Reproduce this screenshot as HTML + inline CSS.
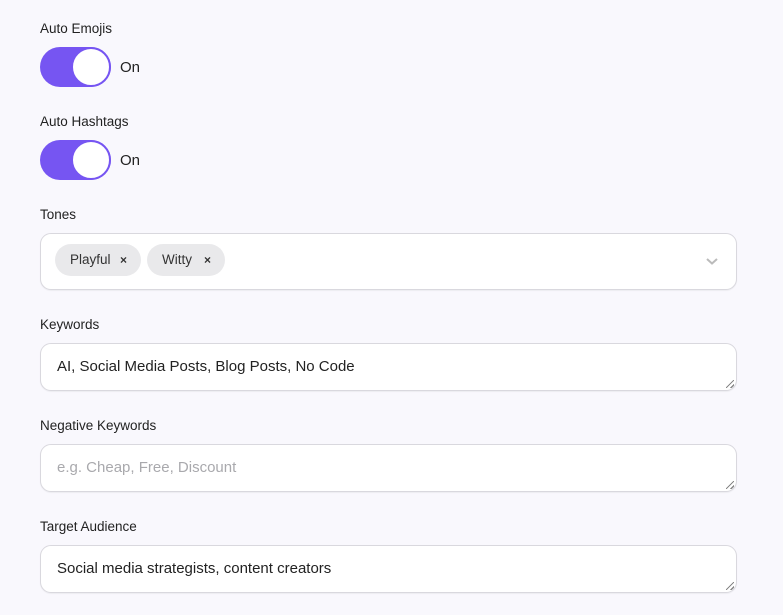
<!DOCTYPE html>
<html><head><style>
body{margin:0;width:783px;height:615px;background:#f9f8fd;font-family:"Liberation Sans",sans-serif;color:#1f1f24;position:relative;overflow:hidden}
.l{position:absolute;left:40px;font-size:13.5px;color:#222}
.tg{position:absolute;left:40px;width:71px;height:40px;border-radius:20px;background:#7655f2}
.tg::after{content:"";position:absolute;right:0;top:0;width:36px;height:36px;border-radius:50%;background:#fff;border:2px solid #7655f2}
.on{position:absolute;left:120px;font-size:15px;color:#222}
.box{position:absolute;left:40px;width:695px;background:#fff;border:1px solid #d9d8de;border-radius:11px;box-shadow:0 1px 1px rgba(0,0,0,.05)}
.in{position:absolute;left:57px;font-size:15px;color:#222}
.chip{position:absolute;top:244px;height:32px;line-height:32px;border-radius:16px;background:#e9e9eb;font-size:13.5px;padding-left:15px;box-sizing:border-box;color:#333}
.chip b{position:absolute;right:14px;font-size:12px}
.rs{position:absolute;right:2px;bottom:2px;width:8px;height:8px;background:linear-gradient(135deg,transparent 45%,#888 45%,#888 55%,transparent 55%,transparent 75%,#888 75%,#888 85%,transparent 85%)}
</style></head><body>
<div class="l" style="top:21px">Auto Emojis</div>
<div class="tg" style="top:47px"></div><div class="on" style="top:59px">On</div>
<div class="l" style="top:114px">Auto Hashtags</div>
<div class="tg" style="top:140px"></div><div class="on" style="top:152px">On</div>
<div class="l" style="top:207px">Tones</div>
<div class="box" style="top:233px;height:55px"></div>
<div class="chip" style="left:55px;width:86px">Playful<b>×</b></div>
<div class="chip" style="left:147px;width:78px">Witty<b>×</b></div>
<svg style="position:absolute;left:705px;top:257px" width="14" height="9"><path d="M2 2l5 4.5 5-4.5" fill="none" stroke="#bbb" stroke-width="2"/></svg>
<div class="l" style="top:317px">Keywords</div>
<div class="box" style="top:343px;height:46px"><div class="rs"></div></div>
<div class="in" style="top:358px">AI, Social Media Posts, Blog Posts, No Code</div>
<div class="l" style="top:418px">Negative Keywords</div>
<div class="box" style="top:444px;height:46px"><div class="rs"></div></div>
<div class="in" style="top:459px;color:#a9a9ad">e.g. Cheap, Free, Discount</div>
<div class="l" style="top:519px">Target Audience</div>
<div class="box" style="top:545px;height:46px"><div class="rs"></div></div>
<div class="in" style="top:560px">Social media strategists, content creators</div>
</body></html>
